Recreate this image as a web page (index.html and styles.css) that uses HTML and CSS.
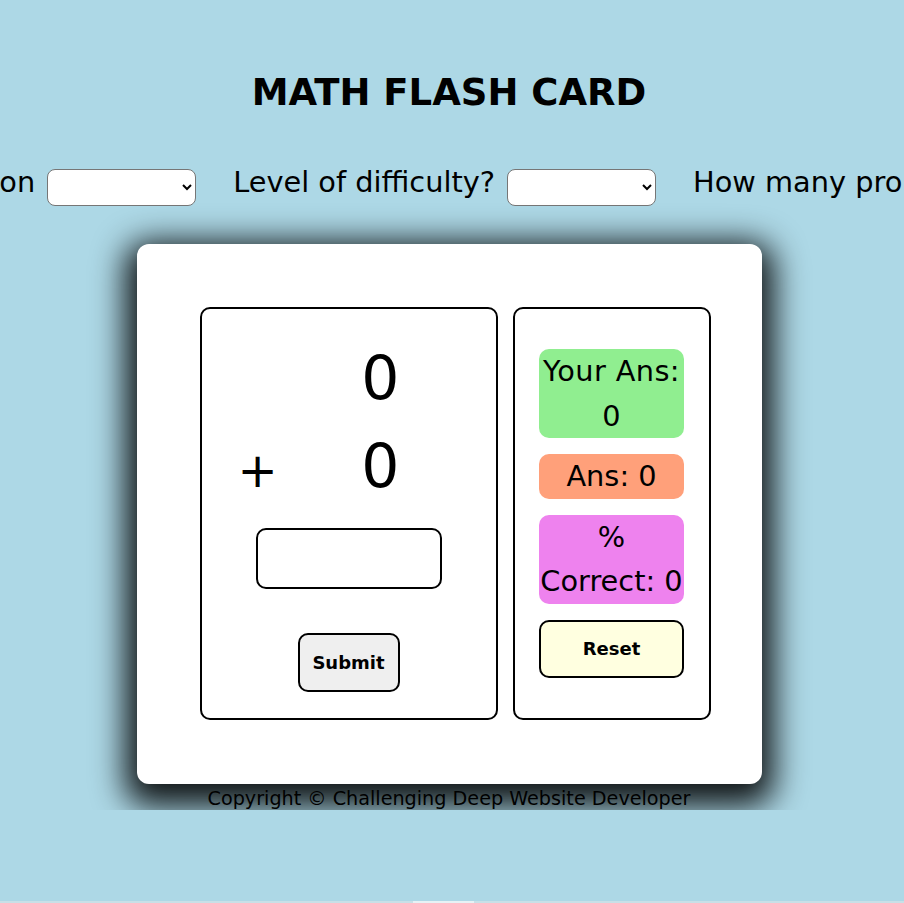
FILE: index.html
```html
<!DOCTYPE html>
<html lang="en">
<head>
<meta charset="utf-8">
<title>Math Flash Card</title>
<link rel="stylesheet" href="styles.css">
</head>
<body>
<div class="page">
  <h1 class="title">MATH FLASH CARD</h1>
  <div class="controls">
    <div class="control"><span class="label">Choose an operation</span><select class="picker"><option></option></select></div>
    <div class="control"><span class="label">Level of difficulty?</span><select class="picker"><option></option></select></div>
    <div class="control"><span class="label">How many problems?</span><select class="picker"><option></option></select></div>
  </div>
  <div class="card">
    <div class="problem-panel">
      <div class="problem">
        <div class="op"></div><div class="num">0</div>
        <div class="op">+</div><div class="num">0</div>
      </div>
      <input class="answer" type="text">
      <button class="submit">Submit</button>
    </div>
    <div class="stats-panel">
      <div class="stat stat-yours">Your Ans: 0</div>
      <div class="stat stat-ans">Ans: 0</div>
      <div class="stat stat-pct">% Correct: 0</div>
      <button class="reset">Reset</button>
    </div>
  </div>
  <p class="footer">Copyright © Challenging Deep Website Developer</p>
</div>
<div class="hscroll"><div class="hscroll-thumb"></div></div>
</body>
</html>
```
FILE: styles.css
```css
html, body {
  margin: 0;
  padding: 0;
}
body {
  background: #add8e6;
  font-family: "DejaVu Sans", Verdana, sans-serif;
  color: #000;
  overflow-x: hidden;
}
.page {
  width: 898px;
  display: flex;
  flex-direction: column;
  align-items: center;
}
.title {
  margin: 0;
  padding-top: 62px;
  line-height: 61px;
  font-size: 37px;
  font-weight: bold;
}
.controls {
  margin-top: 43px;
  margin-left: 4px;
  display: flex;
  justify-content: center;
  gap: 37px;
  font-size: 28.8px;
  white-space: nowrap;
  width: 1498px;
}
.control {
  display: flex;
  align-items: flex-start;
  gap: 12px;
}
.label {
  line-height: 33.5px;
}
.picker {
  margin-top: 3px;
  width: 149px;
  height: 37px;
  border: 1px solid #767676;
  border-radius: 8px;
  background: #fff;
  font-size: 16px;
}
.card {
  margin-top: 38px;
  width: 625px;
  box-sizing: border-box;
  padding: 63px 51px 64px 63px;
  background: #fff;
  border-radius: 12px;
  box-shadow: 0 10px 32px 12px rgba(0, 0, 0, 0.9);
  display: flex;
  gap: 15px;
}
.problem-panel {
  width: 298px;
  box-sizing: border-box;
  border: 2px solid #000;
  border-radius: 10px;
  padding: 25px 0 26px 31px;
  display: flex;
  flex-direction: column;
  align-items: flex-start;
}
.problem {
  display: grid;
  grid-template-columns: 50px 117px;
  font-size: 60px;
  line-height: 88px;
}
.op {
  text-align: center;
  font-size: 48px;
  position: relative;
  top: 4px;
}
.num {
  text-align: right;
}
.answer {
  margin-top: 18px;
  margin-left: 23px;
  width: 186px;
  height: 61px;
  box-sizing: border-box;
  border: 2px solid #000;
  border-radius: 10px;
  background: #fff;
}
.submit {
  margin-top: 44px;
  margin-left: 65px;
  width: 102px;
  height: 59px;
  border: 2px solid #000;
  border-radius: 10px;
  background: #efefef;
  font-family: "DejaVu Sans", sans-serif;
  font-weight: bold;
  font-size: 18px;
  color: #000;
}
.stats-panel {
  width: 198px;
  box-sizing: border-box;
  border: 2px solid #000;
  border-radius: 10px;
  padding-top: 40px;
  display: flex;
  flex-direction: column;
  align-items: center;
  gap: 16px;
}
.stat {
  width: 145px;
  border-radius: 10px;
  font-size: 28.8px;
  line-height: 44.5px;
  text-align: center;
}
.stat-yours { background: #90ee90; letter-spacing: 0.4px; }
.stat-ans { background: #ffa07a; }
.stat-pct { background: #ee82ee; }
.reset {
  width: 145px;
  height: 58px;
  border: 2px solid #000;
  border-radius: 10px;
  background: #ffffe0;
  font-family: "DejaVu Sans", sans-serif;
  font-weight: bold;
  font-size: 18px;
  color: #000;
}
.footer {
  margin: 3px 0 0;
  font-size: 19.2px;
}
.hscroll {
  position: fixed;
  left: 0;
  right: 0;
  bottom: 0;
  height: 2px;
  background: #c8e0e7;
}
.hscroll-thumb {
  margin-left: 413px;
  width: 61px;
  height: 2px;
  background: #e6f2f5;
}
```
